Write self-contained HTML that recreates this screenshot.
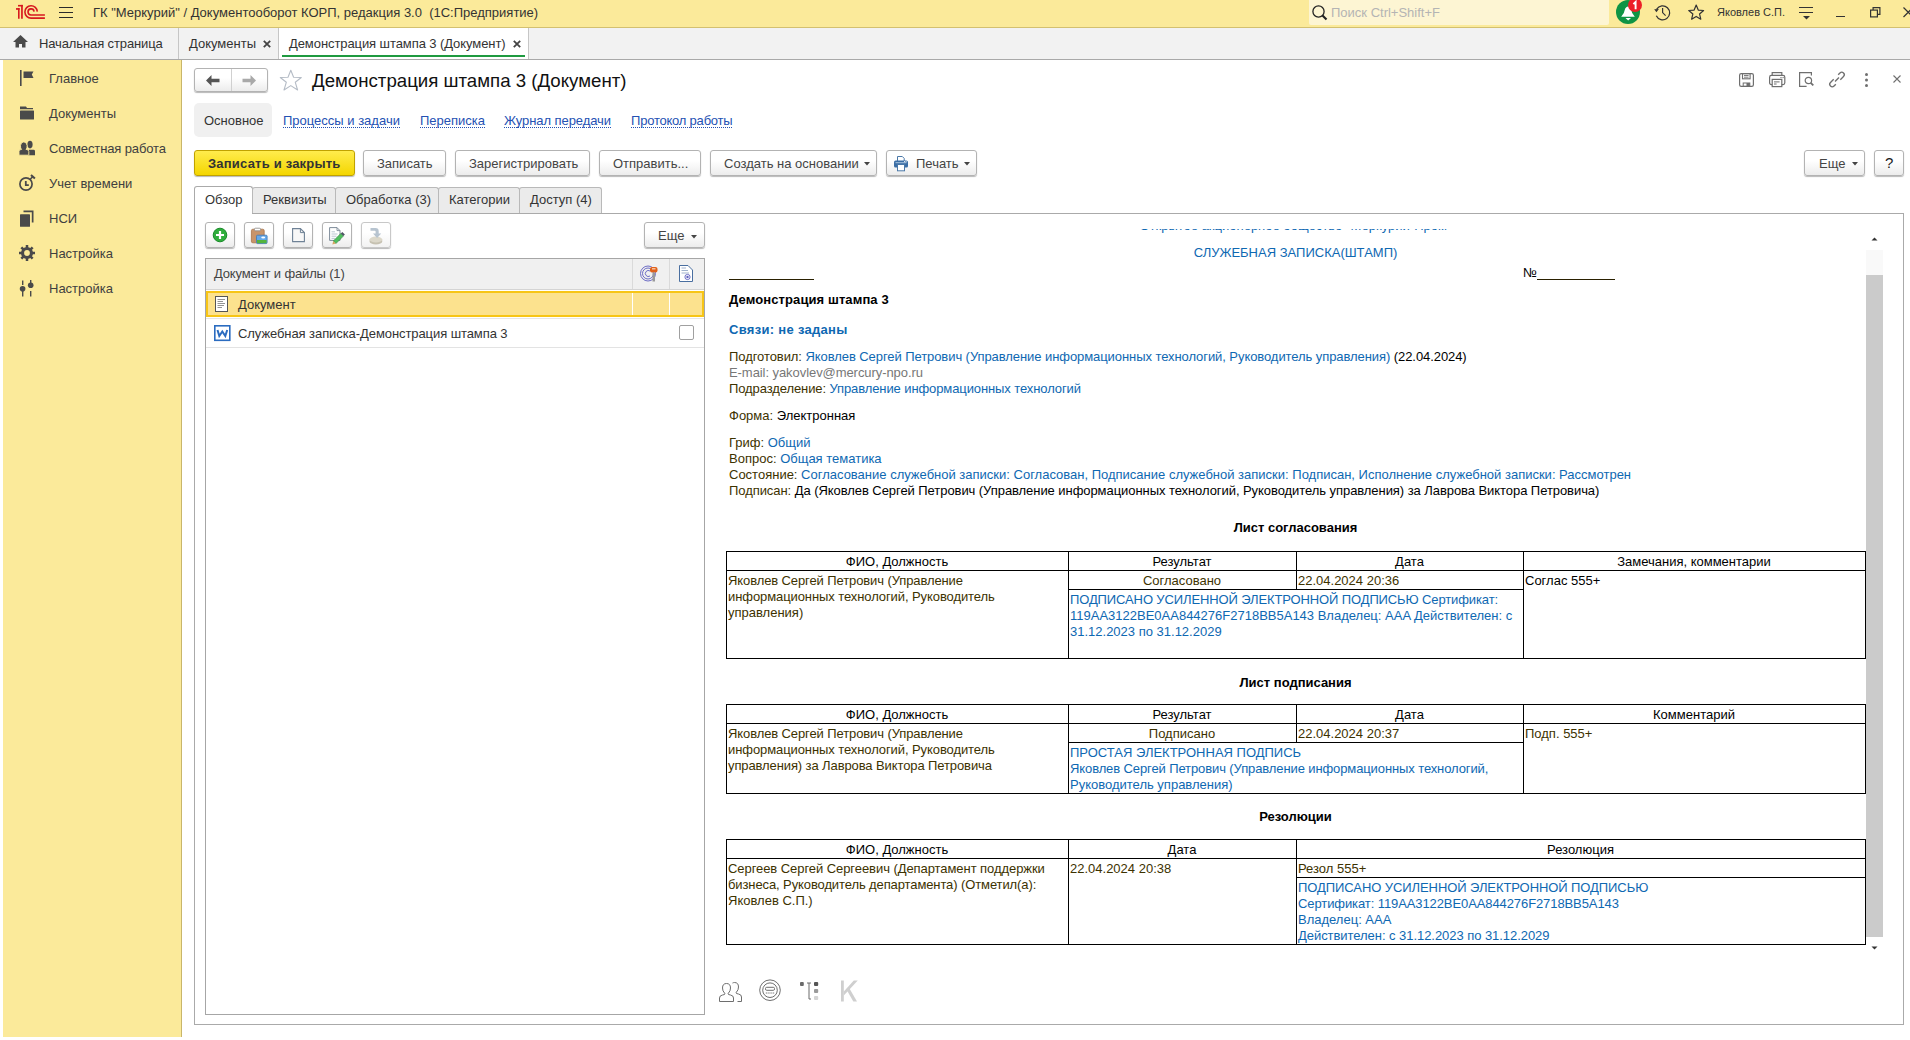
<!DOCTYPE html>
<html><head><meta charset="utf-8">
<style>
*{box-sizing:border-box;margin:0;padding:0}
html,body{width:1910px;height:1040px;overflow:hidden;background:#fff;font-family:"Liberation Sans",sans-serif;font-size:13px;color:#333}
.a{position:absolute}
.t{position:absolute;white-space:nowrap;line-height:16px;font-size:13px}
svg{position:absolute;overflow:visible}
#topbar{left:0;top:0;width:1910px;height:28px;background:#fbea9a;border-bottom:1px solid #d3c070}
#tabbar{left:0;top:28px;width:1910px;height:32px;background:#f2f2f2;border-bottom:1px solid #a9a9a9}
#side{left:3px;top:60px;width:179px;height:977px;background:#fbea9a;border-right:1px solid #c9b66a}
.sep{position:absolute;top:28px;width:1px;height:31px;background:#c6c6c6}
.btn{position:absolute;height:26px;border:1px solid #b3b3b3;border-radius:3px;background:linear-gradient(#fff 40%,#ececec);box-shadow:0 1px 1px rgba(0,0,0,.28)}
.btn .l{position:absolute;white-space:nowrap;line-height:16px;top:5px;color:#444}
.tab{position:absolute;top:187px;height:26px;background:#ebebeb;border:1px solid #b9b9b9;border-bottom:none;border-radius:3px 3px 0 0}
.lnk{position:absolute;white-space:nowrap;line-height:16px;color:#2451b3;top:113px}
.lnk:after{content:"";position:absolute;left:0;right:0;top:14px;border-bottom:1px dotted #2451b3}
.side .t{color:#404040}
.dark{color:#000}
.blue{color:#146eb4}
.gray{color:#808080}
.cell{position:absolute;white-space:nowrap;line-height:16px;color:#3d3200}
.bl{color:#0e68b2}
.k{color:#000}
.k2{color:#3d3200}
.gr{color:#777}
.hl{position:absolute;background:#000;height:1px}
.vl{position:absolute;background:#000;width:1px}
</style></head><body>

<!-- TOP BAR -->
<div id="topbar" class="a"></div>
<svg style="left:12px;top:2px" width="40" height="20" viewBox="0 0 40 20">
  <g fill="#d7191f">
    <rect x="4" y="6.1" width="3.6" height="1.7"/><rect x="6" y="6.1" width="1.6" height="10.65"/>
    <rect x="6" y="2.9" width="4.8" height="1.6"/><rect x="9.1" y="2.9" width="1.7" height="13.85"/>
  </g>
  <g fill="none" stroke="#d7191f" stroke-width="1.6">
    <path d="M25.3 9.6 A6.2 6.2 0 1 0 19.1 16.1 H32.9"/>
    <path d="M22.1 9.6 A3.05 3.05 0 1 0 19 13 H32.9"/>
  </g>
</svg>
<div class="a" style="left:59px;top:7px;width:14px;height:1px;background:#2a2a2a"></div>
<div class="a" style="left:59px;top:12px;width:14px;height:1px;background:#2a2a2a"></div>
<div class="a" style="left:59px;top:17px;width:14px;height:1px;background:#2a2a2a"></div>
<div class="t" style="left:93px;top:5px;color:#333">ГК "Меркурий" / Документооборот КОРП, редакция 3.0&nbsp; (1С:Предприятие)</div>

<div class="a" style="left:1309px;top:0;width:300px;height:25px;background:#fdf5d3;border-radius:0 0 2px 2px"></div>
<svg style="left:1312px;top:5px" width="16" height="16" viewBox="0 0 16 16">
  <circle cx="6.5" cy="6.5" r="5.6" fill="none" stroke="#222" stroke-width="1.3"/>
  <path d="M10.5 10.5 L14.5 14.5" stroke="#222" stroke-width="2.2"/>
</svg>
<div class="t" style="left:1331px;top:5px;color:#b4b4b4">Поиск Ctrl+Shift+F</div>

<svg style="left:1616px;top:0" width="30" height="26" viewBox="0 0 30 26">
  <circle cx="12" cy="12" r="12" fill="#0f9444"/>
  <path d="M5.2 16.8 H18.8 L16.2 13 L14.8 8.5 Q12 4.5 9.2 8.5 L7.8 13 Z" fill="#fff"/>
  <path d="M9.5 18 H15 L12.2 20.5 Z" fill="#fff"/>
  <circle cx="19" cy="5" r="7" fill="#ec2028"/>
  <path d="M17.4 4.2 L19.6 2 V9.2" stroke="#fff" stroke-width="1.9" fill="none"/>
</svg>
<svg style="left:1654px;top:4px" width="18" height="18" viewBox="0 0 18 18">
  <path d="M2.3 11.8 A7 7 0 1 0 2.7 5.2" fill="none" stroke="#333" stroke-width="1.25"/>
  <path d="M0.2 5.2 L4.9 4.9 L2.4 8.2 Z" fill="#333"/>
  <path d="M8.6 4.0 V8.6 L11.6 11.6" fill="none" stroke="#333" stroke-width="1.2"/>
</svg>
<svg style="left:1688px;top:4px" width="18" height="18" viewBox="0 0 18 18">
  <path d="M8.2 1.1 L10.26 6.07 L15.62 6.49 L11.53 9.98 L12.78 15.21 L8.2 12.4 L3.62 15.21 L4.87 9.98 L0.78 6.49 L6.14 6.07 Z" fill="none" stroke="#333" stroke-width="1.2" stroke-linejoin="round"/>
</svg>
<div class="t" style="left:1717px;top:4px;font-size:11px;color:#333">Яковлев С.П.</div>
<div class="a" style="left:1799px;top:7px;width:14px;height:1.3px;background:#333"></div>
<div class="a" style="left:1799px;top:12px;width:14px;height:1.3px;background:#333"></div>
<svg style="left:1803px;top:16px" width="8" height="5" viewBox="0 0 8 5"><path d="M0 0 H7 L3.5 3.5 Z" fill="#333"/></svg>
<div class="a" style="left:1836px;top:16px;width:9px;height:1.3px;background:#333"></div>
<svg style="left:1870px;top:7px" width="11" height="11" viewBox="0 0 11 11">
  <rect x="0.6" y="3.1" width="6.8" height="6.8" fill="none" stroke="#333" stroke-width="1.2"/>
  <path d="M3.1 3.1 V0.6 H9.9 V7.4 H7.4" fill="none" stroke="#333" stroke-width="1.2"/>
</svg>
<svg style="left:1903px;top:7px" width="10" height="11" viewBox="0 0 10 11"><path d="M0.5 0.5 L10 10 M10 0.5 L0.5 10" stroke="#333" stroke-width="1.2"/></svg>

<!-- TAB BAR -->
<div id="tabbar" class="a"></div>
<svg style="left:13px;top:35px" width="15" height="13" viewBox="0 0 15 13">
  <path d="M7.5 0 L15 7 H12.5 V12.5 H9 V9 H6 V12.5 H2.5 V7 H0 Z" fill="#4a4a4a"/>
</svg>
<div class="t" style="letter-spacing:-0.118px;left:39px;top:36px;color:#333">Начальная страница</div>
<div class="sep" style="left:178px"></div>
<div class="t" style="left:189px;top:36px;color:#333">Документы</div>
<svg style="left:263px;top:40px" width="8" height="8" viewBox="0 0 8 8"><path d="M0.8 0.8 L7.2 7.2 M7.2 0.8 L0.8 7.2" stroke="#444" stroke-width="1.8"/></svg>
<div class="sep" style="left:278px"></div>
<div class="a" style="left:279px;top:28px;width:249px;height:31px;background:#fff"></div>
<div class="t" style="letter-spacing:-0.081px;left:289px;top:36px;color:#333">Демонстрация штампа 3 (Документ)</div>
<svg style="left:513px;top:40px" width="8" height="8" viewBox="0 0 8 8"><path d="M0.8 0.8 L7.2 7.2 M7.2 0.8 L0.8 7.2" stroke="#444" stroke-width="1.8"/></svg>
<div class="a" style="left:282px;top:55px;width:243px;height:2px;background:#1f9a40"></div>
<div class="sep" style="left:528px"></div>

<!-- SIDEBAR -->
<div id="side" class="a"></div>
<div class="side">
<div class="t" style="left:49px;top:71px">Главное</div>
<div class="t" style="left:49px;top:106px">Документы</div>
<div class="t" style="letter-spacing:-0.125px;left:49px;top:141px">Совместная работа</div>
<div class="t" style="left:49px;top:176px">Учет времени</div>
<div class="t" style="left:49px;top:211px">НСИ</div>
<div class="t" style="left:49px;top:246px">Настройка</div>
<div class="t" style="left:49px;top:281px">Настройка</div>
</div>
<!-- sidebar icons -->
<svg style="left:19px;top:70px" width="16" height="16" viewBox="0 0 16 16">
  <rect x="1" y="0" width="1.6" height="16" fill="#4a4a4a"/>
  <path d="M4.5 1.5 H14.5 L12.8 4.5 L14.5 8 H4.5 Z" fill="#4a4a4a"/>
</svg>
<svg style="left:19px;top:106px" width="16" height="14" viewBox="0 0 16 14">
  <path d="M1 0.5 H7 L8 2 H14 V3.3 H1 Z" fill="#4a4a4a"/>
  <rect x="1" y="4.5" width="14" height="9" rx="0.5" fill="#4a4a4a"/>
</svg>
<svg style="left:19px;top:140px" width="17" height="16" viewBox="0 0 17 16">
  <ellipse cx="11" cy="4.6" rx="2.6" ry="3.8" fill="#4a4a4a"/>
  <path d="M9 15.2 V11.2 Q9 9.8 10.5 9.8 H14.5 Q16 9.8 16 11.2 V15.2 Z" fill="#4a4a4a"/>
  <path d="M0 15.2 V11.4 Q0 9.8 1.8 9.6 L2.6 9.4 Q1.2 8.6 1.5 5.5 Q1.9 1.9 4.8 1.9 Q7.7 1.9 8.1 5.5 Q8.4 8.6 7 9.4 L7.9 9.6 Q9.8 9.8 9.8 11.4 V15.2 Z" fill="#4a4a4a" stroke="#fbea9a" stroke-width="0.9"/>
</svg>
<svg style="left:19px;top:174px" width="17" height="18" viewBox="0 0 17 18">
  <circle cx="7" cy="10" r="6.1" fill="none" stroke="#4a4a4a" stroke-width="1.7"/>
  <path d="M6.8 7 V11.2 H9.8" fill="none" stroke="#4a4a4a" stroke-width="1.8"/>
  <path d="M11.2 5.2 L13.8 2.6" stroke="#4a4a4a" stroke-width="1.5"/>
  <path d="M12 0.9 L15.9 4.6" stroke="#4a4a4a" stroke-width="2"/>
</svg>
<svg style="left:19px;top:210px" width="16" height="17" viewBox="0 0 16 17">
  <path d="M4.5 0.5 H14.5 V12.5 H12.8 V2.2 H4.5 Z" fill="#4a4a4a"/>
  <rect x="1" y="4.3" width="10" height="12.5" rx="0.6" fill="#4a4a4a"/>
</svg>
<svg style="left:19px;top:245px" width="17" height="17" viewBox="0 0 17 17">
  <g fill="#4a4a4a" transform="translate(8 8)">
    <rect x="-1.25" y="-8" width="2.5" height="16"/>
    <rect x="-1.25" y="-8" width="2.5" height="16" transform="rotate(45)"/>
    <rect x="-1.25" y="-8" width="2.5" height="16" transform="rotate(90)"/>
    <rect x="-1.25" y="-8" width="2.5" height="16" transform="rotate(135)"/>
    <circle r="6"/>
  </g>
  <circle cx="8" cy="8" r="2.9" fill="#fbea9a"/>
</svg>
<svg style="left:19px;top:280px" width="16" height="17" viewBox="0 0 16 17">
  <rect x="3" y="0.5" width="1.4" height="4.5" fill="#4a4a4a"/>
  <circle cx="3.6" cy="8.8" r="2.8" fill="#4a4a4a"/>
  <rect x="3" y="9" width="1.4" height="7.5" fill="#4a4a4a"/>
  <rect x="11" y="0" width="1.4" height="3" fill="#4a4a4a"/>
  <circle cx="11.7" cy="5.2" r="2.8" fill="#4a4a4a"/>
  <rect x="11" y="11" width="1.4" height="5.5" fill="#4a4a4a"/>
</svg>

<!-- CONTENT HEADER -->
<div class="a" style="left:194px;top:68px;width:74px;height:24px;border:1px solid #b3b3b3;border-radius:3px;background:linear-gradient(#fff 40%,#ececec);box-shadow:0 1px 1px rgba(0,0,0,.28)"></div>
<div class="a" style="left:231px;top:69px;width:1px;height:22px;background:#d0d0d0"></div>
<svg style="left:206px;top:75px" width="14" height="11" viewBox="0 0 14 11"><path d="M0 5.5 L5.5 0 V3.8 H13.5 V7.2 H5.5 V11 Z" fill="#555"/></svg>
<svg style="left:242px;top:75px" width="14" height="11" viewBox="0 0 14 11"><path d="M14 5.5 L8.5 0 V3.8 H0.5 V7.2 H8.5 V11 Z" fill="#a9a9a9"/></svg>
<svg style="left:279px;top:69px" width="24" height="23" viewBox="0 0 24 23">
  <path d="M11.8 1.2 L14.6 8.3 L22.3 8.5 L16.3 13.3 L18.6 21 L11.8 16.6 L5 21 L7.3 13.3 L1.3 8.5 L9 8.3 Z" fill="none" stroke="#b5bcc6" stroke-width="1.1" stroke-linejoin="round"/>
</svg>
<div class="t" style="left:312px;top:71px;font-size:18.67px;line-height:20px;color:#111">Демонстрация штампа 3 (Документ)</div>

<!-- right header icons -->
<svg style="left:1739px;top:73px" width="15" height="14" viewBox="0 0 15 14">
  <rect x="0.6" y="0.6" width="13.8" height="12.8" rx="1.6" fill="none" stroke="#6f6f6f" stroke-width="1.2"/>
  <rect x="3.5" y="0.6" width="7.6" height="5.2" fill="none" stroke="#6f6f6f" stroke-width="1.1"/>
  <path d="M5 2.5 H9.6 M5 4.2 H9.6" stroke="#6f6f6f" stroke-width="0.9"/>
  <rect x="4.2" y="10" width="6.6" height="3.4" fill="none" stroke="#6f6f6f" stroke-width="1"/>
  <rect x="7.5" y="10" width="3.3" height="3.4" fill="#6f6f6f"/>
</svg>
<svg style="left:1769px;top:72px" width="17" height="16" viewBox="0 0 17 16">
  <rect x="3.2" y="0.6" width="9.6" height="3.4" fill="none" stroke="#6f6f6f" stroke-width="1.2"/>
  <rect x="0.6" y="3.4" width="15.2" height="9.2" rx="1.8" fill="#fff" stroke="#6f6f6f" stroke-width="1.2"/>
  <rect x="3.2" y="7.4" width="9.6" height="7.2" fill="#fff" stroke="#6f6f6f" stroke-width="1.2"/>
  <path d="M5 9.9 H10.6 M5 12 H7.6 M11.4 5.6 H12.6 M13.5 5.6 H14.7" stroke="#6f6f6f" stroke-width="1"/>
</svg>
<svg style="left:1799px;top:72px" width="16" height="16" viewBox="0 0 16 16">
  <path d="M12.4 3.4 V0.6 H0.6 V14.4 H7.6" fill="none" stroke="#6f6f6f" stroke-width="1.2"/>
  <circle cx="9.4" cy="8.5" r="3.2" fill="none" stroke="#6f6f6f" stroke-width="1.2"/>
  <path d="M11.7 10.8 L14.3 13.4" stroke="#6f6f6f" stroke-width="1.8"/>
</svg>
<svg style="left:1829px;top:71px" width="16" height="17" viewBox="0 0 16 17">
  <g transform="rotate(-45 8 8.5)" fill="none" stroke="#6f6f6f" stroke-width="1.35">
    <path d="M5.8 6 H1.3 A2.5 2.5 0 0 0 1.3 11 H3.8"/>
    <path d="M10.2 11 H14.7 A2.5 2.5 0 0 0 14.7 6 H12.2"/>
    <path d="M5.2 8.5 H10.8"/>
  </g>
</svg>
<svg style="left:1864px;top:72px" width="5" height="16" viewBox="0 0 5 16">
  <circle cx="2.5" cy="2.5" r="1.5" fill="#6f6f6f"/><circle cx="2.5" cy="8" r="1.5" fill="#6f6f6f"/><circle cx="2.5" cy="13.5" r="1.5" fill="#6f6f6f"/>
</svg>
<svg style="left:1893px;top:75px" width="10" height="10" viewBox="0 0 10 10"><path d="M0.5 0.5 L7.5 7.5 M7.5 0.5 L0.5 7.5" stroke="#6f6f6f" stroke-width="1.1"/></svg>

<!-- Form nav links -->
<div class="a" style="left:194px;top:103px;width:78px;height:34px;background:#f0f0f0;border-radius:5px"></div>
<div class="t" style="left:204px;top:113px;color:#333">Основное</div>
<div class="lnk" style="left:283px">Процессы и задачи</div>
<div class="lnk" style="left:420px">Переписка</div>
<div class="lnk" style="letter-spacing:-0.071px;left:504px">Журнал передачи</div>
<div class="lnk" style="letter-spacing:-0.214px;left:631px">Протокол работы</div>

<!-- command bar -->
<div class="btn" style="left:194px;top:150px;width:161px;border-color:#c0a200;background:linear-gradient(#ffec4d,#f4d600);"><span class="l" style="letter-spacing:0.206px;left:13px;font-weight:bold;color:#333">Записать и закрыть</span></div>
<div class="btn" style="left:363px;top:150px;width:83px"><span class="l" style="left:13px">Записать</span></div>
<div class="btn" style="left:455px;top:150px;width:135px"><span class="l" style="left:13px">Зарегистрировать</span></div>
<div class="btn" style="left:599px;top:150px;width:102px"><span class="l" style="left:13px">Отправить...</span></div>
<div class="btn" style="left:710px;top:150px;width:167px"><span class="l" style="left:13px">Создать на основании</span>
  <svg style="left:153px;top:11px" width="7" height="4" viewBox="0 0 7 4"><path d="M0 0 H6 L3 3.5 Z" fill="#444"/></svg></div>
<div class="btn" style="left:886px;top:150px;width:91px">
  <svg style="left:6px;top:4px" width="16" height="17" viewBox="0 0 16 17">
    <path d="M4.5 1.5 H9.3 L11.2 3.4 V6.5 H4.5 Z" fill="#fff" stroke="#4a78a8" stroke-width="1"/>
    <rect x="1" y="5.6" width="14" height="7" rx="1.6" fill="#3b6ea5"/>
    <rect x="2.5" y="7.2" width="11" height="1" fill="#a9c4de"/>
    <rect x="11" y="6.2" width="1" height="0.9" fill="#fff"/><rect x="12.6" y="6.2" width="1" height="0.9" fill="#fff"/>
    <rect x="4.5" y="9.5" width="7" height="6.3" fill="#fff" stroke="#4a78a8" stroke-width="1"/>
  </svg>
  <span class="l" style="left:29px">Печать</span>
  <svg style="left:77px;top:11px" width="7" height="4" viewBox="0 0 7 4"><path d="M0 0 H6 L3 3.5 Z" fill="#444"/></svg></div>
<div class="btn" style="left:1804px;top:150px;width:61px"><span class="l" style="left:14px">Еще</span>
  <svg style="left:47px;top:11px" width="7" height="4" viewBox="0 0 7 4"><path d="M0 0 H6 L3 3.5 Z" fill="#444"/></svg></div>
<div class="btn" style="left:1874px;top:150px;width:30px"><span class="l" style="left:10px;top:4px;font-size:15px;color:#1a1a1a">?</span></div>

<!-- TABS + PANEL -->
<div class="a" style="left:194px;top:213px;width:1710px;height:812px;border:1px solid #aaa;border-top:none"></div>
<div class="a" style="left:252px;top:213px;width:1652px;height:1px;background:#aaa"></div>
<div class="a" style="left:194px;top:186px;width:59px;height:28px;background:#fff;border:1px solid #aaa;border-bottom:none;border-radius:3px 3px 0 0"></div>
<div class="t" style="left:205px;top:192px;color:#333">Обзор</div>
<div class="tab" style="left:252px;width:84px"><span class="t" style="left:10px;top:4px;color:#333">Реквизиты</span></div>
<div class="tab" style="left:335px;width:104px"><span class="t" style="left:10px;top:4px;color:#333">Обработка (3)</span></div>
<div class="tab" style="left:438px;width:82px"><span class="t" style="left:10px;top:4px;color:#333">Категории</span></div>
<div class="tab" style="left:519px;width:83px"><span class="t" style="left:10px;top:4px;color:#333">Доступ (4)</span></div>

<!-- toolbar -->
<div class="btn" style="left:205px;top:222px;width:30px;height:26px">
  <svg style="left:6px;top:4px" width="16" height="16" viewBox="0 0 16 16">
    <circle cx="8" cy="8" r="6.8" fill="#2fae3c" stroke="#198a29" stroke-width="1"/>
    <path d="M8 4 V12 M4 8 H12" stroke="#fff" stroke-width="2.2"/>
  </svg></div>
<div class="btn" style="left:244px;top:222px;width:30px;height:26px">
  <svg style="left:6px;top:5px" width="17" height="17" viewBox="0 0 17 17">
    <rect x="0.4" y="1.2" width="12.8" height="13.6" rx="1.5" fill="#c8946a" stroke="#a8734a" stroke-width="0.8"/>
    <rect x="3.5" y="0.2" width="6" height="2.6" rx="1" fill="#fff" stroke="#8a8a8a" stroke-width="0.8"/>
    <rect x="5.5" y="7.2" width="10.6" height="8.4" rx="1" fill="#63a8ea" stroke="#3f77b5" stroke-width="0.8"/>
    <rect x="6" y="12" width="9.6" height="3.2" fill="#52b43c"/>
    <ellipse cx="12.2" cy="9.6" rx="2" ry="1" fill="#fff"/>
  </svg></div>
<div class="btn" style="left:283px;top:222px;width:30px;height:26px">
  <svg style="left:8px;top:5px" width="14" height="15" viewBox="0 0 14 15">
    <path d="M0.6 0.6 H8.4 L12.4 4.6 V13.6 H0.6 Z" fill="#f8f8f8" stroke="#6f8296" stroke-width="1.1"/>
    <path d="M8.4 0.6 V4.6 H12.4" fill="none" stroke="#6f8296" stroke-width="1"/>
  </svg></div>
<div class="btn" style="left:322px;top:222px;width:30px;height:26px">
  <svg style="left:6px;top:4px" width="18" height="19" viewBox="0 0 18 19">
    <path d="M0.6 0.6 H8 L11 3.6 V13.4 H0.6 Z" fill="#fff" stroke="#7d8b99" stroke-width="1"/>
    <path d="M8 0.6 V3.6 H11" fill="none" stroke="#7d8b99" stroke-width="0.9"/>
    <path d="M2.5 4.8 H6 M2.5 7 H8.5 M2.5 9.2 H7.5 M2.5 11.4 H6" stroke="#aab7c4" stroke-width="0.8"/>
    <path d="M4.3 14 L11.8 6.5 L14.4 9.1 L6.9 16.6 Z" fill="#4fbf5e" stroke="#2f7f3a" stroke-width="0.6"/>
    <path d="M4.3 14 L6.9 16.6 L3.4 17.6 Z" fill="#d7a563"/>
    <path d="M11.8 6.5 L13.3 5 L15.9 7.6 L14.4 9.1 Z" fill="#4d5563"/>
  </svg></div>
<div class="btn" style="left:361px;top:222px;width:30px;height:26px;background:linear-gradient(#fff 40%,#f2f2f2);border-color:#c8c8c8">
  <svg style="left:7px;top:4px" width="15" height="19" viewBox="0 0 15 19">
    <path d="M0.6 12.5 V14.5 A6.3 3 0 0 0 13.2 14.5 V12.5 Z" fill="#c6c1b1"/>
    <ellipse cx="6.9" cy="12.5" rx="6.3" ry="3" fill="#dcd8ca"/>
    <path d="M1.5 1 H6.5 Q9.7 1 9.7 4.2 V6.5 H12.2 L8.1 11 L4 6.5 H6.6 V4.4 Q6.6 3.7 5.9 3.7 H1.5 Z" fill="#b7c4d0"/>
  </svg></div>
<div class="btn" style="left:644px;top:222px;width:61px;height:26px"><span class="l" style="left:13px;top:5px">Еще</span>
  <svg style="left:46px;top:12px" width="7" height="4" viewBox="0 0 7 4"><path d="M0 0 H6 L3 3.5 Z" fill="#444"/></svg></div>

<!-- grid -->
<div class="a" style="left:205px;top:258px;width:500px;height:757px;border:1px solid #a6a6a6;background:#fff"></div>
<div class="a" style="left:206px;top:259px;width:498px;height:31px;background:#f0f0f0;border-bottom:1px solid #d4d4d4"></div>
<div class="a" style="left:632px;top:259px;width:1px;height:30px;background:#dadada"></div>
<div class="a" style="left:669px;top:259px;width:1px;height:30px;background:#dadada"></div>
<div class="t" style="letter-spacing:-0.158px;left:214px;top:266px;color:#444">Документ и файлы (1)</div>
<svg style="left:640px;top:265px" width="18" height="17" viewBox="0 0 18 17">
  <g fill="none" stroke="#5d5dbf" stroke-width="0.9">
    <circle cx="8" cy="8.5" r="7.5"/><circle cx="8" cy="8.5" r="5.5"/><path d="M10 6 A3 3 0 1 0 10 11"/>
  </g>
  <rect x="10" y="2" width="7.5" height="5.5" rx="2" fill="#e0611a"/>
  <rect x="12" y="3" width="3.5" height="1.5" fill="#f5c0a0"/>
  <rect x="12.5" y="7.5" width="2.5" height="9" fill="#999"/>
</svg>
<svg style="left:679px;top:265px" width="14" height="17" viewBox="0 0 14 17">
  <path d="M0.5 0.5 H9 L13.5 5 V16.5 H0.5 Z" fill="#fff" stroke="#4a6fa0" stroke-width="1"/>
  <path d="M2.5 3 H7 M2.5 5.5 H9 M2.5 8 H10" stroke="#8aa0c0" stroke-width="0.8"/>
  <circle cx="8.5" cy="12" r="2.6" fill="none" stroke="#6060c0" stroke-width="0.9"/>
  <circle cx="8.5" cy="12" r="1.2" fill="#6060c0"/>
</svg>
<!-- selected row -->
<div class="a" style="left:206px;top:291px;width:498px;height:26px;background:#fce28e;border:2px solid #f7c516"></div>
<div class="a" style="left:632px;top:293px;width:1px;height:22px;background:#fff"></div>
<div class="a" style="left:669px;top:293px;width:1px;height:22px;background:#fff"></div>
<div class="a" style="left:206px;top:318px;width:498px;height:1px;background:#e6e6e6"></div>
<svg style="left:215px;top:296px" width="13" height="16" viewBox="0 0 13 16">
  <rect x="0.5" y="0.5" width="12" height="15" fill="#fff" stroke="#555" stroke-width="1"/>
  <path d="M2.5 3.5 H10 M2.5 5.5 H8 M2.5 7.5 H10 M2.5 9.5 H9 M2.5 11.5 H7" stroke="#777" stroke-width="0.8"/>
</svg>
<div class="t" style="left:238px;top:297px;color:#333">Документ</div>
<div class="a" style="left:206px;top:347px;width:498px;height:1px;background:#e3e3e3"></div>
<svg style="left:214px;top:325px" width="17" height="16" viewBox="0 0 17 16">
  <rect x="0.8" y="0.8" width="15" height="14.5" fill="#fff" stroke="#2b6cc0" stroke-width="1.6"/>
  <path d="M3.5 5 L5.3 11 L8.3 6.5 L11.3 11 L13.2 5" fill="none" stroke="#2b6cc0" stroke-width="2"/>
</svg>
<div class="t" style="letter-spacing:-0.079px;left:238px;top:326px;color:#333">Служебная записка-Демонстрация штампа 3</div>
<div class="a" style="left:679px;top:325px;width:15px;height:15px;border:1px solid #a0a0a0;border-radius:2px;background:#fff"></div>

<!-- bottom icons -->
<svg style="left:719px;top:982px" width="25" height="21" viewBox="0 0 25 21">
  <g fill="none" stroke="#6e6e6e" stroke-width="1">
    <path d="M0.5 19.5 V16 Q0.5 13.5 3.5 13 L5.5 12.5 Q6.5 12 5.5 11 Q3.5 9 3.5 6 Q3.5 1.5 7.5 1.5 Q11.5 1.5 11.5 6 Q11.5 9 9.5 11 Q8.5 12 9.5 12.5 L11.5 13 Q14.5 13.5 14.5 16 V19.5 Z"/>
    <path d="M13.5 1 Q14.5 0.5 15.5 0.5 Q19.5 0.5 19.5 5 Q19.5 8 17.5 10 Q16.5 11 17.5 11.5 L19.5 12 Q22.5 12.5 22.5 15 V19.5 H18.5"/>
  </g>
</svg>
<svg style="left:759px;top:979px" width="23" height="23" viewBox="0 0 23 23">
  <g fill="none" stroke="#6e6e6e" stroke-width="1">
    <circle cx="11" cy="11.2" r="10.3"/><circle cx="11" cy="11.2" r="7.3"/>
    <rect x="6.5" y="8.3" width="9" height="3" rx="1.2"/>
  </g>
  <path d="M6.8 14 H15.2" stroke="#6e6e6e" stroke-width="0.9" stroke-dasharray="1.2 0.6"/>
</svg>
<svg style="left:800px;top:982px" width="21" height="21" viewBox="0 0 21 21">
  <rect x="0" y="0" width="3.8" height="4" rx="1" fill="#6a6a6a"/>
  <rect x="14" y="0" width="4.2" height="4" rx="1" fill="#555"/>
  <rect x="14" y="7" width="4.2" height="4" rx="1" fill="#9a9a9a"/>
  <rect x="14" y="14" width="4.2" height="4" rx="1" fill="#d4d4d4"/>
  <path d="M7 1 H11 M9 1 V17 H11" fill="none" stroke="#6a6a6a" stroke-width="1"/>
</svg>
<svg style="left:835px;top:975px" width="26" height="30" viewBox="0 0 26 30"><g fill="#cfcfcf"><rect x="6" y="5.5" width="2.8" height="21"/><path d="M8.8 16.5 L18.8 5.5 H22.8 L8.8 20.5 Z"/><path d="M11.3 14.2 L13.6 11.9 L22 26.5 H18.3 Z"/></g></svg>

<!-- DOC VIEW -->
<div class="a" id="doc" style="left:0;top:0;width:1910px;height:1040px;clip-path:inset(229px 27px 88px 716px)">
<div class="cell bl" style="top:218px;left:895.5px;width:800px;text-align:center;">Открытое акционерное общество "Меркурий-Пром"</div>
<div class="cell bl" style="top:245px;left:895.5px;width:800px;text-align:center;">СЛУЖЕБНАЯ ЗАПИСКА(ШТАМП)</div>
<div class="a" style="left:729px;top:279px;width:85px;height:1px;background:#2a2000"></div>
<div class="cell k" style="top:265px;left:1523px;">№</div>
<div class="a" style="left:1537px;top:279px;width:78px;height:1px;background:#2a2000"></div>
<div class="cell k" style="letter-spacing:0.100px;top:292px;left:729px;font-weight:bold;">Демонстрация штампа 3</div>
<div class="cell bl" style="letter-spacing:0.300px;top:322px;left:729px;font-weight:bold;">Связи: не заданы</div>
<div class="cell " style="letter-spacing:-0.072px;top:349px;left:729px;">Подготовил: <span class="bl">Яковлев Сергей Петрович (Управление информационных технологий, Руководитель управления)</span><span class="k"> (22.04.2024)</span></div>
<div class="cell gr" style="letter-spacing:-0.067px;top:365px;left:729px;">E-mail: yakovlev@mercury-npo.ru</div>
<div class="cell " style="letter-spacing:-0.100px;top:381px;left:729px;">Подразделение: <span class="bl">Управление информационных технологий</span></div>
<div class="cell " style="top:408px;left:729px;">Форма: <span class="k">Электронная</span></div>
<div class="cell " style="top:435px;left:729px;">Гриф: <span class="bl">Общий</span></div>
<div class="cell " style="top:451px;left:729px;">Вопрос: <span class="bl">Общая тематика</span></div>
<div class="cell " style="top:467px;left:729px;">Состояние: <span class="bl">Согласование служебной записки: Согласован, Подписание служебной записки: Подписан, Исполнение служебной записки: Рассмотрен</span></div>
<div class="cell " style="letter-spacing:-0.062px;top:483px;left:729px;">Подписан: <span class="k">Да (Яковлев Сергей Петрович (Управление информационных технологий, Руководитель управления) за Лаврова Виктора Петровича)</span></div>
<div class="cell k" style="top:520px;left:895.5px;width:800px;text-align:center;font-weight:bold;">Лист согласования</div>
<div class="hl" style="left:726px;top:551px;width:1140px"></div>
<div class="hl" style="left:726px;top:570px;width:1140px"></div>
<div class="hl" style="left:726px;top:658px;width:1140px"></div>
<div class="hl" style="left:1068px;top:589px;width:456px"></div>
<div class="vl" style="left:726px;top:551px;height:108px"></div>
<div class="vl" style="left:1068px;top:551px;height:108px"></div>
<div class="vl" style="left:1296px;top:551px;height:39px"></div>
<div class="vl" style="left:1523px;top:551px;height:108px"></div>
<div class="vl" style="left:1865px;top:551px;height:108px"></div>
<div class="cell k" style="top:554px;left:497px;width:800px;text-align:center;">ФИО, Должность</div>
<div class="cell k" style="top:554px;left:782px;width:800px;text-align:center;">Результат</div>
<div class="cell k" style="top:554px;left:1009.5px;width:800px;text-align:center;">Дата</div>
<div class="cell k" style="top:554px;left:1294px;width:800px;text-align:center;">Замечания, комментарии</div>
<div class="cell k2" style="letter-spacing:-0.103px;top:573px;left:728px;">Яковлев Сергей Петрович (Управление</div>
<div class="cell k2" style="letter-spacing:-0.087px;top:589px;left:728px;">информационных технологий, Руководитель</div>
<div class="cell k2" style="top:605px;left:728px;">управления)</div>
<div class="cell k2" style="top:573px;left:782px;width:800px;text-align:center;">Согласовано</div>
<div class="cell k2" style="top:573px;left:1298px;">22.04.2024 20:36</div>
<div class="cell k" style="top:573px;left:1525px;">Соглас 555+</div>
<div class="cell bl" style="letter-spacing:-0.118px;top:592px;left:1070px;">ПОДПИСАНО УСИЛЕННОЙ ЭЛЕКТРОННОЙ ПОДПИСЬЮ Сертификат:</div>
<div class="cell bl" style="top:608px;left:1070px;">119AA3122BE0AA844276F2718BB5A143 Владелец: AAA Действителен: с</div>
<div class="cell bl" style="top:624px;left:1070px;">31.12.2023 по 31.12.2029</div>
<div class="cell k" style="top:675px;left:895.5px;width:800px;text-align:center;font-weight:bold;">Лист подписания</div>
<div class="hl" style="left:726px;top:704px;width:1140px"></div>
<div class="hl" style="left:726px;top:723px;width:1140px"></div>
<div class="hl" style="left:726px;top:793px;width:1140px"></div>
<div class="hl" style="left:1068px;top:742px;width:456px"></div>
<div class="vl" style="left:726px;top:704px;height:90px"></div>
<div class="vl" style="left:1068px;top:704px;height:90px"></div>
<div class="vl" style="left:1296px;top:704px;height:39px"></div>
<div class="vl" style="left:1523px;top:704px;height:90px"></div>
<div class="vl" style="left:1865px;top:704px;height:90px"></div>
<div class="cell k" style="top:707px;left:497px;width:800px;text-align:center;">ФИО, Должность</div>
<div class="cell k" style="top:707px;left:782px;width:800px;text-align:center;">Результат</div>
<div class="cell k" style="top:707px;left:1009.5px;width:800px;text-align:center;">Дата</div>
<div class="cell k" style="top:707px;left:1294px;width:800px;text-align:center;">Комментарий</div>
<div class="cell k2" style="letter-spacing:-0.103px;top:726px;left:728px;">Яковлев Сергей Петрович (Управление</div>
<div class="cell k2" style="letter-spacing:-0.087px;top:742px;left:728px;">информационных технологий, Руководитель</div>
<div class="cell k2" style="letter-spacing:-0.103px;top:758px;left:728px;">управления) за Лаврова Виктора Петровича</div>
<div class="cell k2" style="top:726px;left:782px;width:800px;text-align:center;">Подписано</div>
<div class="cell k2" style="top:726px;left:1298px;">22.04.2024 20:37</div>
<div class="cell k2" style="top:726px;left:1525px;">Подп. 555+</div>
<div class="cell bl" style="top:745px;left:1070px;">ПРОСТАЯ ЭЛЕКТРОННАЯ ПОДПИСЬ</div>
<div class="cell bl" style="letter-spacing:-0.107px;top:761px;left:1070px;">Яковлев Сергей Петрович (Управление информационных технологий,</div>
<div class="cell bl" style="top:777px;left:1070px;">Руководитель управления)</div>
<div class="cell k" style="top:809px;left:895.5px;width:800px;text-align:center;font-weight:bold;">Резолюции</div>
<div class="hl" style="left:726px;top:839px;width:1140px"></div>
<div class="hl" style="left:726px;top:858px;width:1140px"></div>
<div class="hl" style="left:726px;top:944px;width:1140px"></div>
<div class="hl" style="left:1296px;top:877px;width:570px"></div>
<div class="vl" style="left:726px;top:839px;height:106px"></div>
<div class="vl" style="left:1068px;top:839px;height:106px"></div>
<div class="vl" style="left:1296px;top:839px;height:106px"></div>
<div class="vl" style="left:1865px;top:839px;height:106px"></div>
<div class="cell k" style="top:842px;left:497px;width:800px;text-align:center;">ФИО, Должность</div>
<div class="cell k" style="top:842px;left:782px;width:800px;text-align:center;">Дата</div>
<div class="cell k" style="top:842px;left:1180.5px;width:800px;text-align:center;">Резолюция</div>
<div class="cell k2" style="letter-spacing:-0.065px;top:861px;left:728px;">Сергеев Сергей Сергеевич (Департамент поддержки</div>
<div class="cell k2" style="letter-spacing:-0.106px;top:877px;left:728px;">бизнеса, Руководитель департамента) (Отметил(а):</div>
<div class="cell k2" style="top:893px;left:728px;">Яковлев С.П.)</div>
<div class="cell k2" style="top:861px;left:1070px;">22.04.2024 20:38</div>
<div class="cell k2" style="top:861px;left:1298px;">Резол 555+</div>
<div class="cell bl" style="letter-spacing:-0.077px;top:880px;left:1298px;">ПОДПИСАНО УСИЛЕННОЙ ЭЛЕКТРОННОЙ ПОДПИСЬЮ</div>
<div class="cell bl" style="letter-spacing:-0.093px;top:896px;left:1298px;">Сертификат: 119AA3122BE0AA844276F2718BB5A143</div>
<div class="cell bl" style="top:912px;left:1298px;">Владелец: AAA</div>
<div class="cell bl" style="letter-spacing:-0.051px;top:928px;left:1298px;">Действителен: с 31.12.2023 по 31.12.2029</div>
</div>
<!-- doc scrollbar -->
<svg style="left:1871px;top:237px" width="7" height="4" viewBox="0 0 7 4"><path d="M0.5 3.6 H6.5 L3.5 0.4 Z" fill="#333"/></svg>
<div class="a" style="left:1866px;top:250px;width:17px;height:25px;background:#f9f9f9"></div>
<div class="a" style="left:1866px;top:275px;width:17px;height:662px;background:#cbcbcb"></div>
<svg style="left:1871px;top:946px" width="7" height="4" viewBox="0 0 7 4"><path d="M0.5 0.4 H6.5 L3.5 3.6 Z" fill="#333"/></svg>
</body></html>
